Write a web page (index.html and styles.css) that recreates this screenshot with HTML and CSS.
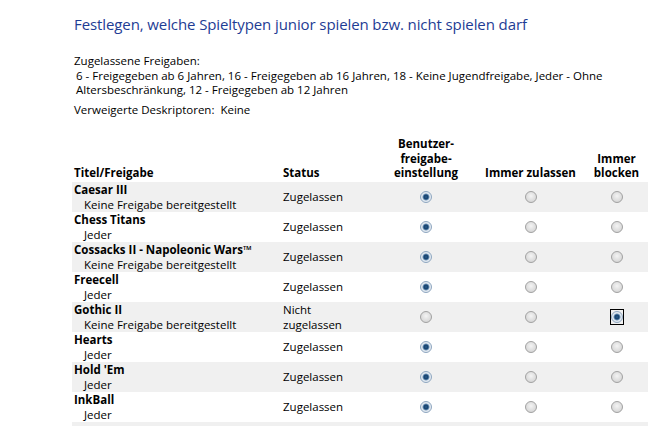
FILE: index.html
```html
<!DOCTYPE html>
<html lang="de">
<head>
<meta charset="utf-8">
<title>Spiele</title>
<link rel="stylesheet" href="styles.css">
</head>
<body>
<div class="page">
  <h1 class="title">Festlegen, welche Spieltypen junior spielen bzw. nicht spielen darf</h1>
  <div class="info">
    <p class="label">Zugelassene Freigaben:</p>
    <p class="ratings">6 - Freigegeben ab 6 Jahren, 16 - Freigegeben ab 16 Jahren, 18 - Keine Jugendfreigabe, Jeder - Ohne<br>Altersbeschränkung, 12 - Freigegeben ab 12 Jahren</p>
    <p class="denied">Verweigerte Deskriptoren:&nbsp; Keine</p>
  </div>
  <table class="games">
    <thead>
      <tr>
        <th class="c-title">Titel/Freigabe</th>
        <th class="c-status">Status</th>
        <th class="c-user">Benutzer-<br>freigabe-<br>einstellung</th>
        <th class="c-allow">Immer zulassen</th>
        <th class="c-block">Immer<br>blocken</th>
      </tr>
    </thead>
    <tbody>
      <tr class="alt">
        <td class="c-title"><div class="name">Caesar III</div><div class="rating">Keine Freigabe bereitgestellt</div></td>
        <td class="c-status">Zugelassen</td>
        <td class="c-user"><span class="radio on"></span></td>
        <td class="c-allow"><span class="radio"></span></td>
        <td class="c-block"><span class="radio"></span></td>
      </tr>
      <tr>
        <td class="c-title"><div class="name">Chess Titans</div><div class="rating">Jeder</div></td>
        <td class="c-status">Zugelassen</td>
        <td class="c-user"><span class="radio on"></span></td>
        <td class="c-allow"><span class="radio"></span></td>
        <td class="c-block"><span class="radio"></span></td>
      </tr>
      <tr class="alt">
        <td class="c-title"><div class="name">Cossacks II - Napoleonic Wars™</div><div class="rating">Keine Freigabe bereitgestellt</div></td>
        <td class="c-status">Zugelassen</td>
        <td class="c-user"><span class="radio on"></span></td>
        <td class="c-allow"><span class="radio"></span></td>
        <td class="c-block"><span class="radio"></span></td>
      </tr>
      <tr>
        <td class="c-title"><div class="name">Freecell</div><div class="rating">Jeder</div></td>
        <td class="c-status">Zugelassen</td>
        <td class="c-user"><span class="radio on"></span></td>
        <td class="c-allow"><span class="radio"></span></td>
        <td class="c-block"><span class="radio"></span></td>
      </tr>
      <tr class="alt">
        <td class="c-title"><div class="name">Gothic II</div><div class="rating">Keine Freigabe bereitgestellt</div></td>
        <td class="c-status">Nicht<br>zugelassen</td>
        <td class="c-user"><span class="radio"></span></td>
        <td class="c-allow"><span class="radio"></span></td>
        <td class="c-block"><span class="focus"><span class="radio on"></span></span></td>
      </tr>
      <tr>
        <td class="c-title"><div class="name">Hearts</div><div class="rating">Jeder</div></td>
        <td class="c-status">Zugelassen</td>
        <td class="c-user"><span class="radio on"></span></td>
        <td class="c-allow"><span class="radio"></span></td>
        <td class="c-block"><span class="radio"></span></td>
      </tr>
      <tr class="alt">
        <td class="c-title"><div class="name">Hold 'Em</div><div class="rating">Jeder</div></td>
        <td class="c-status">Zugelassen</td>
        <td class="c-user"><span class="radio on"></span></td>
        <td class="c-allow"><span class="radio"></span></td>
        <td class="c-block"><span class="radio"></span></td>
      </tr>
      <tr>
        <td class="c-title"><div class="name">InkBall</div><div class="rating">Jeder</div></td>
        <td class="c-status">Zugelassen</td>
        <td class="c-user"><span class="radio on"></span></td>
        <td class="c-allow"><span class="radio"></span></td>
        <td class="c-block"><span class="radio"></span></td>
      </tr>
      <tr class="alt">
        <td class="c-title"></td>
        <td class="c-status"></td>
        <td class="c-user"></td>
        <td class="c-allow"></td>
        <td class="c-block"></td>
      </tr>
    </tbody>
  </table>
</div>
</body>
</html>
```

FILE: styles.css
```css
html, body {
  margin: 0;
  padding: 0;
  background: #ffffff;
  overflow: hidden;
}
body {
  font-family: "Open Sans", "Noto Sans", "DejaVu Sans", sans-serif;
  font-size: 11.5px;
  color: #000000;
}
.page {
  padding: 14px 0 0 72px;
}
.title {
  margin: 0 0 0 2px;
  font-size: 15px;
  font-weight: normal;
  color: #1e3c94;
  line-height: 20px;
  letter-spacing: -0.1px;
}
.info {
  margin: 20px 0 0 2px;
  line-height: 14.5px;
}
.info p {
  margin: 0;
}
.ratings {
  padding-left: 2px;
}
.denied {
  margin-top: 5px !important;
}
.games {
  margin-top: 20px;
  border-collapse: collapse;
  width: 576px;
  table-layout: fixed;
}
.games th {
  font-weight: bold;
  vertical-align: bottom;
  line-height: 14.5px;
  padding: 0 0 1px 0;
}
.games td {
  height: 30px;
  padding: 0;
  vertical-align: middle;
  line-height: 15px;
}
.games tr.alt td {
  background: #f0f0f0;
}
.c-title {
  width: 209px;
  text-align: left;
  padding-left: 2px !important;
}
.c-status {
  width: 97px;
  text-align: left;
}
.c-user {
  width: 92px;
  text-align: center;
}
.c-allow {
  width: 117px;
  text-align: center;
}
.c-block {
  text-align: center;
  padding-right: 4px !important;
}
.name {
  font-weight: bold;
}
.rating {
  padding-left: 10px;
}
.radio {
  display: inline-block;
  box-sizing: border-box;
  width: 12px;
  height: 12px;
  border-radius: 50%;
  border: 1px solid #a2a2a2;
  background: radial-gradient(circle at 50% 40%, #f4f4f4 0, #e2e2e2 45%, #cfcfcf 100%);
  vertical-align: middle;
  position: relative;
  top: -1px;
}
.radio.on {
  border-color: #8fa7c0;
  background: radial-gradient(circle at 50% 50%, #2a5d8e 0, #15406b 28%, #5b84ab 40%, #dfe7ef 55%, #eef2f6 100%);
}
.focus {
  display: inline-block;
  border: 1px solid #000000;
  padding: 1px 0;
  width: 12px;
  line-height: 0;
}
.focus .radio {
  top: 0;
}
```
